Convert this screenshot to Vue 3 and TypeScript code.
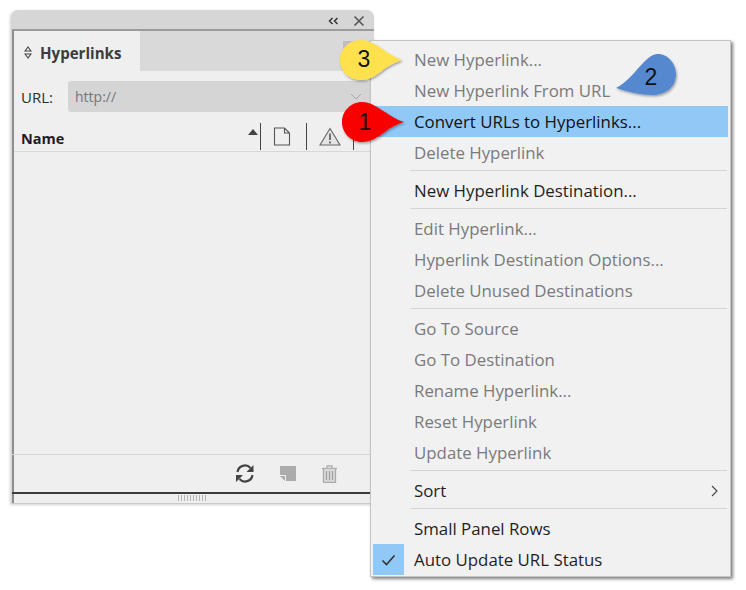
<script setup lang="ts">
interface Item { label?: string; disabled?: boolean; active?: boolean; checked?: boolean; submenu?: boolean; sep?: boolean }
const items: Item[] = [
  { label: 'New Hyperlink...', disabled: true },
  { label: 'New Hyperlink From URL', disabled: true },
  { label: 'Convert URLs to Hyperlinks...', active: true },
  { label: 'Delete Hyperlink', disabled: true },
  { sep: true },
  { label: 'New Hyperlink Destination...' },
  { sep: true },
  { label: 'Edit Hyperlink...', disabled: true },
  { label: 'Hyperlink Destination Options...', disabled: true },
  { label: 'Delete Unused Destinations', disabled: true },
  { sep: true },
  { label: 'Go To Source', disabled: true },
  { label: 'Go To Destination', disabled: true },
  { label: 'Rename Hyperlink...', disabled: true },
  { label: 'Reset Hyperlink', disabled: true },
  { label: 'Update Hyperlink', disabled: true },
  { sep: true },
  { label: 'Sort', submenu: true },
  { sep: true },
  { label: 'Small Panel Rows' },
  { label: 'Auto Update URL Status', checked: true },
]
</script>

<template>
  <div class="canvas">
    <section class="panel">
      <header class="titlebar">
        <svg class="collapse" width="11" height="8" viewBox="0 0 11 8"><path d="M4.500 1 1.500 4l3 3M9.500 1l-3 3 3 3" fill="none" stroke="#333" stroke-width="1.500"/></svg>
        <svg class="close" width="12" height="12" viewBox="0 0 12 12"><path d="M1.500 1.500l9 9M10.500 1.500l-9 9" fill="none" stroke="#555" stroke-width="1.600"/></svg>
      </header>
      <div class="body">
        <div class="tabs">
          <div class="tab">
            <svg width="8" height="13" viewBox="0 0 8 13"><path d="M4 1 7 5H1zM4 12 1 8h6z" fill="none" stroke="#444" stroke-width="1.100"/></svg>
            <span>Hyperlinks</span>
          </div>
          <div class="tab-menu"></div>
        </div>
        <div class="url-row">
          <span class="url-label">URL:</span>
          <div class="url-input">
            <span>http://</span>
            <svg width="12" height="7" viewBox="0 0 12 7"><path d="M1 1l5 5 5-5" fill="none" stroke="#a8a8a8" stroke-width="1"/></svg>
          </div>
        </div>
        <div class="list-head">
          <span class="name">Name</span>
          <i class="sort"></i>
          <i class="vline"></i>
          <svg class="doc" width="18" height="19" viewBox="0 0 18 19"><path d="M1.500 1h10l5 5v12h-15zM11.500 1v5h5" fill="none" stroke="#555" stroke-width="1.100"/></svg>
          <i class="vline"></i>
          <svg class="warn" width="22" height="19" viewBox="0 0 22 19"><path d="M11 1.500 21 18H1z" fill="#e4e4e4" stroke="#666" stroke-width="1.100"/><path d="M11 6.500v6.500M11 14.500v2" stroke="#666" stroke-width="1.800"/></svg>
          <i class="vline"></i>
        </div>
        <div class="list"></div>
        <footer class="foot">
          <svg width="20" height="19" viewBox="0 0 20 19"><path d="M2.500 8A7.500 7.500 0 0 1 15.500 4M17.500 11A7.500 7.500 0 0 1 4.500 15" fill="none" stroke="#444" stroke-width="2.200"/><path d="M18.500 1v7h-7zM1 18v-7h7z" fill="#444"/></svg>
          <svg width="16" height="15" viewBox="0 0 16 15"><path d="M0 0h16v15H6V9H0zM0 10h5v5z" fill="#ababab"/></svg>
          <svg width="17" height="18" viewBox="0 0 17 18"><path d="M1 3.500h15M6 3V1h5v2" fill="none" stroke="#b0b0b0" stroke-width="1.300"/><path d="M2.500 4v13.500h12V4" fill="#dadada" stroke="#ababab" stroke-width="1.300"/><path d="M5.500 6v9M8.500 6v9M11.500 6v9" stroke="#a0a0a0" stroke-width="1.200"/></svg>
        </footer>
        <div class="grip"><i v-for="n in 10" :key="n"></i></div>
      </div>
    </section>

    <nav class="menu">
      <template v-for="(item, i) in items" :key="i">
        <div v-if="item.sep" class="sep"></div>
        <div v-else class="row" :class="{ disabled: item.disabled, active: item.active }">
          <span class="gutter" :class="{ checked: item.checked }">
            <svg v-if="item.checked" width="15" height="12" viewBox="0 0 15 12"><path d="M1.500 6.500l4 4 8-9" fill="none" stroke="#333" stroke-width="1.600"/></svg>
          </span>
          <span class="label">{{ item.label }}</span>
          <svg v-if="item.submenu" class="chev" width="7" height="12" viewBox="0 0 7 12"><path d="M1 1l5 5-5 5" fill="none" stroke="#444" stroke-width="1.100"/></svg>
        </div>
      </template>
    </nav>

    <svg class="callouts" width="746" height="590" viewBox="0 0 746 590">
      <defs>
        <filter id="sh" x="-20%" y="-20%" width="140%" height="140%"><feDropShadow dx="1" dy="1.500" stdDeviation="1" flood-color="#000" flood-opacity=".35"/></filter>
      </defs>
      <path d="M340 60C340 49 349 40 361 40C370 40 378 46 385 51C391 55 396 58 402 60C396 62 390 65 384 69C377 75 370 80 361 80C349 80 340 71 340 60z" fill="#ffe14d" filter="url(#sh)"/>
      <path d="M342 122C342 111 351 102 362 102C371 102 378 108 385 112C391 116 397 120 404 122C397 124 391 127 385 132C378 137 371 142 362 142C351 142 342 133 342 122z" fill="#f90000" filter="url(#sh)"/>
      <path d="M616 88C628 82 636 70 644 62C650 56 654 54 658 54C668 54 676 64 676 74C676 87 666 95 652 95C640 95 628 92 616 88z" fill="#5588cf" filter="url(#sh)"/>
      <text x="364" y="67" class="num">3</text>
      <text x="365" y="130" class="num">1</text>
      <text x="651" y="85" class="num">2</text>
    </svg>
  </div>
</template>

<style>
html, body { margin: 0; background: #fff; }
</style>

<style scoped>
.canvas {
  position: relative;
  width: 746px;
  height: 590px;
  padding: 10px 0 0 11px;
  box-sizing: border-box;
  overflow: hidden;
  font-family: "Open Sans", "Noto Sans", sans-serif;
  color: #222;
}
.panel {
  width: 363px;
  height: 494px;
  display: flex;
  flex-direction: column;
  background: #d6d6d6;
  border-radius: 7px 7px 0 0;
  box-shadow: -1px 1px 3px rgba(0, 0, 0, .18);
}
.titlebar {
  height: 19px;
  flex: none;
  display: flex;
  align-items: center;
  justify-content: flex-end;
  gap: 14px;
  padding: 3px 9px 0 0;
  box-sizing: border-box;
}
.body {
  flex: 1;
  display: flex;
  flex-direction: column;
  margin-left: 1px;
  background: #efefef;
  border-top: 2px solid #9b9b9b;
  border-left: 2px solid #8e8e8e;
}
.tabs { height: 40px; flex: none; background: #d9d9d9; display: flex; }
.tab {
  width: 126px;
  display: flex;
  align-items: center;
  gap: 8px;
  padding: 3px 0 0 10px;
  box-sizing: border-box;
  background: #efefef;
  font: 700 15.100px "Open Sans", sans-serif;
  color: #3c3c3c;
}
.tab-menu {
  width: 28px;
  height: 22px;
  margin: 10px 3px 0 auto;
  background: #bdbdbd;
}
.url-row {
  height: 31px;
  margin-top: 10px;
  flex: none;
  display: flex;
  align-items: center;
  padding: 0 4px 0 7px;
}
.url-label { width: 47px; font-size: 15px; color: #2d2d2d; }
.url-input {
  flex: 1;
  height: 31px;
  display: flex;
  align-items: center;
  justify-content: space-between;
  padding: 0 8px 0 7px;
  background: #d5d5d5;
  border-radius: 3px;
  font-size: 14px;
  color: #757575;
}
.list-head {
  height: 30px;
  margin-top: 9px;
  flex: none;
  display: flex;
  align-items: center;
  padding: 0 20px 0 7px;
  border-bottom: 1px solid #d8d8d8;
}
.name { font: 700 14.500px "Open Sans", sans-serif; color: #1e1e1e; flex: 1; margin-top: 4px; }
.sort {
  width: 0; height: 0;
  border: 5px solid transparent;
  border-top: 0;
  border-bottom: 6px solid #444;
  margin: 0 2px 8px 0;
}
.vline { width: 1px; height: 27px; background: #444; }
.doc { margin: 0 15px 0 12px; }
.warn { margin: 0 12px 0 12px; }
.list { flex: 1; }
.foot {
  height: 40px;
  flex: none;
  display: flex;
  align-items: center;
  justify-content: flex-end;
  gap: 25px;
  padding: 0 36px 0 0;
  box-sizing: border-box;
  border-top: 1px solid #d8d8d8;
  border-bottom: 2px solid #3c3c3c;
  margin-left: -2px;
}
.grip {
  height: 10px;
  flex: none;
  box-sizing: border-box;
  display: flex;
  justify-content: center;
  align-items: flex-start;
  gap: 2px;
  padding: 1px 2px 0 0;
  margin-left: -2px;
  border-bottom: 1px solid #c9c9c9;
}
.grip i { width: 1px; height: 6px; background: #b4b4b4; }
.menu {
  position: absolute;
  left: 370px;
  top: 40px;
  width: 361px;
  height: 537px;
  padding: 3px 2px 1px 2px;
  box-sizing: border-box;
  background: #f1f1f1;
  border: 1px solid #c4c4c4;
  box-shadow: 2px 2px 3px rgba(0, 0, 0, .5);
}
.row {
  height: 31px;
  display: flex;
  align-items: center;
  font-size: 16.850px;
  color: #1f1f1f;
}
.row.disabled { color: #7a7a7a; }
.row.active { background: #90c8f6; color: #111; }
.gutter {
  width: 31px;
  height: 31px;
  margin-right: 10px;
  flex: none;
  display: flex;
  align-items: center;
  justify-content: center;
}
.gutter.checked { background: #90c8f6; }
.label { flex: 1; white-space: nowrap; }
.chev { margin-right: 10px; }
.sep { height: 1px; margin: 2px 1px 4px 37px; background: #d4d4d4; }
.callouts { position: absolute; left: 0; top: 0; pointer-events: none; }
.num { font: 400 23px "Liberation Sans", sans-serif; text-anchor: middle; fill: #111; }
</style>
